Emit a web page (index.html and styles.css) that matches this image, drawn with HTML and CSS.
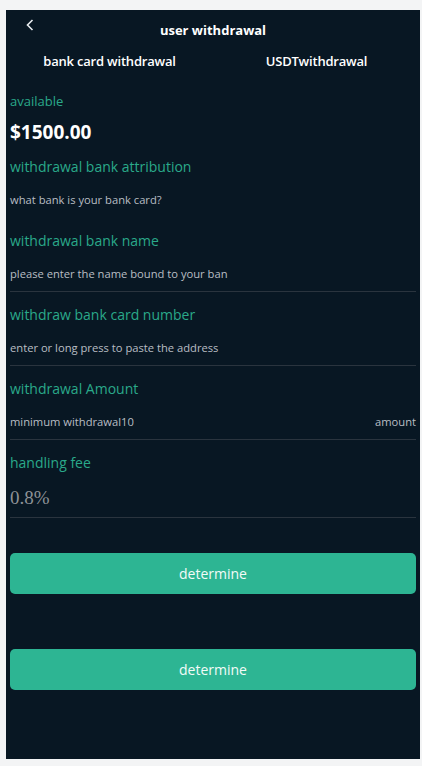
FILE: index.html
```html
<!DOCTYPE html>
<html>
<head>
<meta charset="utf-8">
<link rel="stylesheet" href="styles.css">
</head>
<body>
<div class="page">
  <header class="topbar">
    <span class="back"><svg width="8" height="12" viewBox="0 0 8 12"><polyline points="6.5,1 1.5,6 6.5,11" fill="none" stroke="#e8ecef" stroke-width="1.6"/></svg></span>
    <h1 class="title">user withdrawal</h1>
  </header>
  <nav class="tabs">
    <div class="tab">bank card withdrawal</div>
    <div class="tab">USDTwithdrawal</div>
  </nav>
  <main class="content">
    <div class="label small">available</div>
    <div class="balance">$1500.00</div>
    <div class="field noline">
      <div class="label">withdrawal bank attribution</div>
      <div class="input">what bank is your bank card?</div>
    </div>
    <div class="field">
      <div class="label">withdrawal bank name</div>
      <div class="input">please enter the name bound to your ban</div>
    </div>
    <div class="field">
      <div class="label">withdraw bank card number</div>
      <div class="input">enter or long press to paste the address</div>
    </div>
    <div class="field">
      <div class="label">withdrawal Amount</div>
      <div class="input split"><span>minimum withdrawal10</span><span>amount</span></div>
    </div>
    <div class="field">
      <div class="label">handling fee</div>
      <div class="input fee">0.8%</div>
    </div>
    <button class="btn first">determine</button>
    <button class="btn second">determine</button>
  </main>
</div>
</body>
</html>
```
FILE: styles.css
```css
html, body {
  margin: 0;
  padding: 0;
  background: #f3f4f5;
}
body {
  padding: 10px 2px 7px 6px;
  font-family: "Open Sans", "Noto Sans", sans-serif;
}
.page {
  background: #081723;
  height: 749px;
  box-sizing: border-box;
}
.topbar {
  position: relative;
  height: 40px;
  display: flex;
  align-items: center;
  justify-content: center;
}
.back {
  position: absolute;
  left: 20px;
  top: 9px;
  display: flex;
}
.title {
  margin: 0;
  font-size: 13px;
  font-weight: 700;
  color: #ffffff;
}
.tabs {
  display: flex;
  height: 21px;
  align-items: center;
}
.tab {
  flex: 1;
  text-align: center;
  font-size: 13px;
  font-weight: 600;
  letter-spacing: -0.2px;
  color: #ffffff;
}
.content {
  padding: 18px 4px 0;
}
.label {
  color: #2aa98a;
  font-size: 14px;
  line-height: 32px;
  height: 32px;
}
.label.small {
  font-size: 13px;
  line-height: 24px;
  height: 24px;
}
.balance {
  color: #ffffff;
  font-size: 19px;
  font-weight: 700;
  line-height: 38px;
  height: 38px;
}
.field {
  padding-top: 7px;
  border-bottom: 1px solid #2a343e;
}
.field.noline {
  border-bottom: none;
  padding-top: 0;
  padding-bottom: 1px;
}
.input {
  height: 34px;
  line-height: 34px;
  font-size: 11.2px;
  color: #b9bec4;
}
.input.split {
  display: flex;
  justify-content: space-between;
}
.input.fee {
  height: 38px;
  line-height: 38px;
  font-family: "Liberation Serif", serif;
  font-size: 19px;
  color: #8d9196;
}
.btn {
  display: block;
  width: 100%;
  height: 41px;
  border: none;
  border-radius: 5px;
  background: #2db593;
  color: #f3fbf8;
  font-family: inherit;
  font-size: 14px;
}
.btn.first {
  margin-top: 35px;
}
.btn.second {
  margin-top: 55px;
}
```
